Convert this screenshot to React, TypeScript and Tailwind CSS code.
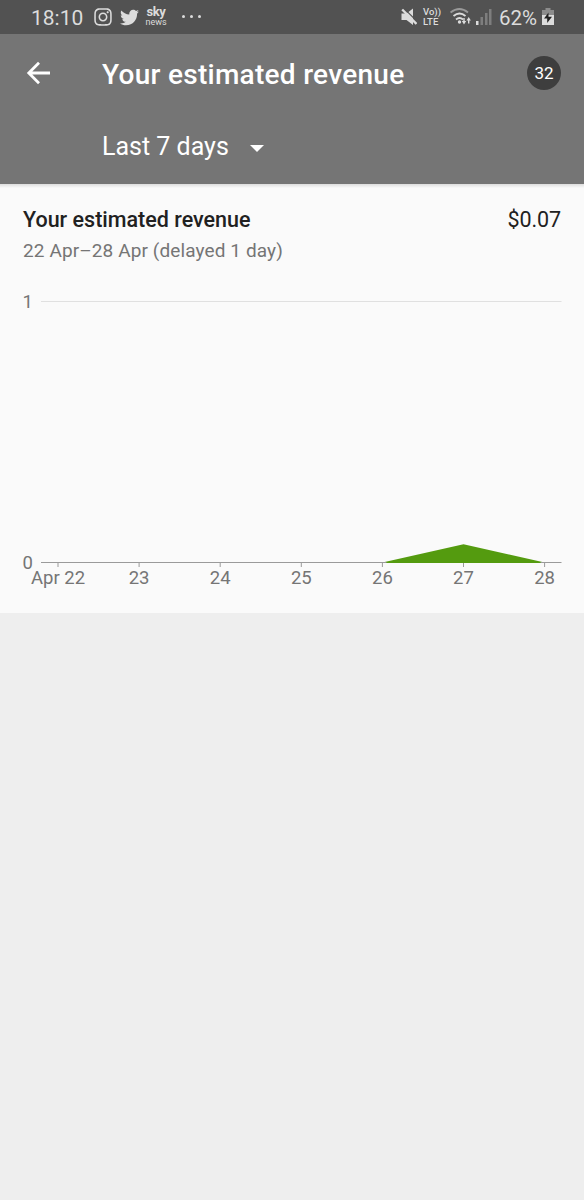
import React from 'react'
import { FaInstagram, FaTwitter } from 'react-icons/fa'

type Point = {
  label: string
  value: number
}

const revenue: Point[] = [
  { label: 'Apr 22', value: 0 },
  { label: '23', value: 0 },
  { label: '24', value: 0 },
  { label: '25', value: 0 },
  { label: '26', value: 0 },
  { label: '27', value: 0.07 },
  { label: '28', value: 0 },
]

function StatusBar() {
  return (
    <div className="flex h-[34px] items-center bg-[#525252] pr-[30px] pl-[31px] text-[#dcdcdc]">
      <span className="w-[63px] pt-[2px] text-[21px] leading-[32px]">18:10</span>
      <FaInstagram className="h-[20px] w-[18px]" />
      <FaTwitter className="ml-[8px] h-[19px] w-[19px]" />
      <div className="ml-[6px] flex w-[22px] flex-col items-center pb-px">
        <span className="text-[13px] leading-[12px] font-bold tracking-[-0.4px]">
          sky
        </span>
        <span className="text-[9px] leading-[9px]">news</span>
      </div>
      <div className="ml-[15px] flex gap-[5px] pb-[2px]">
        <i className="h-[3px] w-[3px] rounded-full bg-[#dcdcdc]" />
        <i className="h-[3px] w-[3px] rounded-full bg-[#dcdcdc]" />
        <i className="h-[3px] w-[3px] rounded-full bg-[#dcdcdc]" />
      </div>
      <svg className="ml-auto h-[18px] w-[16px]" viewBox="0 0 16 18">
        <path d="M.5 5.500h5L12 .5v16.500L5.500 12h-5z" fill="currentColor" />
        <path d="M2.800 .2 16.800 14.200" stroke="#525252" strokeWidth="1.200" />
        <path d="M1.200 1.500 15.500 16" stroke="currentColor" strokeWidth="2.400" />
      </svg>
      <div className="ml-[6px] flex w-[19px] flex-col text-[9.500px] leading-[10px] font-medium">
        <span>Vo))</span>
        <span className="tracking-[0.1px]">LTE</span>
      </div>
      <svg className="ml-[8px] h-[18px] w-[22px]" viewBox="0 0 22 18">
        <g fill="none" stroke="currentColor" strokeWidth="1.800">
          <path d="M.5 4.500Q9.500-2.500 18 4.500" stroke="#999" />
          <path d="M3.500 8Q9.500 3 15.500 8" />
          <path d="M6 11.500Q9.500 8.500 13 11.500" />
        </g>
        <circle cx="9.500" cy="14" r="1.700" fill="currentColor" />
        <path
          d="m11.800 13 2.200 3.500 2.200-3.500h-1.500v-3h-1.400v3zM16.500 12.500 18.700 9l2.200 3.500h-1.500v3h-1.400v-3z"
          fill="currentColor"
        />
      </svg>
      <svg className="ml-[4px] h-[18px] w-[16px]" viewBox="0 0 16 18">
        <path d="M0 13h2.500v4H0z" fill="currentColor" />
        <path d="M4.500 9H7v8H4.500zM9 5h2.500v12H9zM13 1h2.500v16H13z" fill="#7e7e7e" />
      </svg>
      <span className="ml-[7px] w-[39px] pt-[2px] text-[20.500px] leading-[32px] whitespace-nowrap">
        62%
      </span>
      <svg className="ml-[4px] h-[18px] w-[12px]" viewBox="0 0 12 18">
        <path d="M3.500 0h5v2H12v6H0V2h3.500z" fill="#8c8c8c" />
        <path d="M0 7h12v10H0z" fill="currentColor" />
        <path d="M6.500 4.500v4.300H10L5.200 15v-4.500H2z" fill="#222" />
      </svg>
    </div>
  )
}

function Header() {
  return (
    <header className="h-[150px] bg-[#757575] pr-[23px] pl-[26px] text-white">
      <div className="flex h-[78px] items-center">
        <svg
          className="h-[24px] w-[25px]"
          viewBox="0 0 25 24"
          fill="none"
          stroke="currentColor"
          strokeWidth="2.800"
        >
          <path d="M24 12H3M13 1.800 2.800 12 13 22.200" />
        </svg>
        <h1 className="ml-[51px] pt-[3px] text-[28px] font-medium tracking-[0.280px]">
          Your estimated revenue
        </h1>
        <span className="ml-auto flex h-[34px] w-[34px] items-center justify-center rounded-full bg-[#3e3e3e] pt-[2px] text-[17px]">
          32
        </span>
      </div>
      <div className="flex h-[68px] items-center pl-[76px]">
        <span className="w-[126px] pt-[2px] text-[25px] whitespace-nowrap">
          Last 7 days
        </span>
        <svg className="mt-[5px] ml-[22px] h-[7px] w-[14px]" viewBox="0 0 14 7">
          <path d="M0 0h14L7 7z" fill="currentColor" />
        </svg>
      </div>
    </header>
  )
}

function Chart() {
  const baseline = 282.5
  const top = 21.5
  const x = (i: number) => 58 + i * 81.1
  const y = (value: number) => baseline - value * (baseline - top)
  const area = revenue.map((p, i) => `${x(i)},${y(p.value)}`).join(' ')

  return (
    <svg
      className="block h-[333px] w-[584px] text-[18.500px]"
      viewBox="0 0 584 333"
      fill="#757575"
    >
      <path d="M41 21.500H561.500" stroke="#e0e0e0" />
      <polygon points={area} fill="#549b0f" />
      <path d={`M41 ${baseline}H561.500`} stroke="#9a9a9a" />
      <path d={`M${x(4) + 4} ${baseline}H${x(6) - 4}`} stroke="#549b0f" />
      <text x="22.500" y="28">
        1
      </text>
      <text x="22.500" y="289">
        0
      </text>
      {revenue.map((p, i) => (
        <g key={p.label}>
          <path d={`M${x(i)} 283v4`} stroke="#9a9a9a" />
          <text x={x(i)} y="304" textAnchor="middle">
            {p.label}
          </text>
        </g>
      ))}
    </svg>
  )
}

export default function App() {
  return (
    <div className="min-h-[1200px] w-[584px] bg-[#eeeeee] font-['Roboto',sans-serif]">
      <StatusBar />
      <Header />
      <main className="h-[429px] bg-[#fafafa]">
        <div className="h-[4px] bg-linear-to-b from-[#dddddd] to-[#fafafa]" />
        <div className="flex h-[92px] flex-col px-[23px] pt-[16px]">
          <div className="flex justify-between text-[21.500px] leading-[32px] text-[#212121]">
            <h2 className="font-medium">Your estimated revenue</h2>
            <span className="tracking-[-0.1px]">$0.07</span>
          </div>
          <p className="text-[19px] leading-[30px] tracking-[0.110px] text-[#757575]">
            22 Apr–28 Apr (delayed 1 day)
          </p>
        </div>
        <Chart />
      </main>
    </div>
  )
}
